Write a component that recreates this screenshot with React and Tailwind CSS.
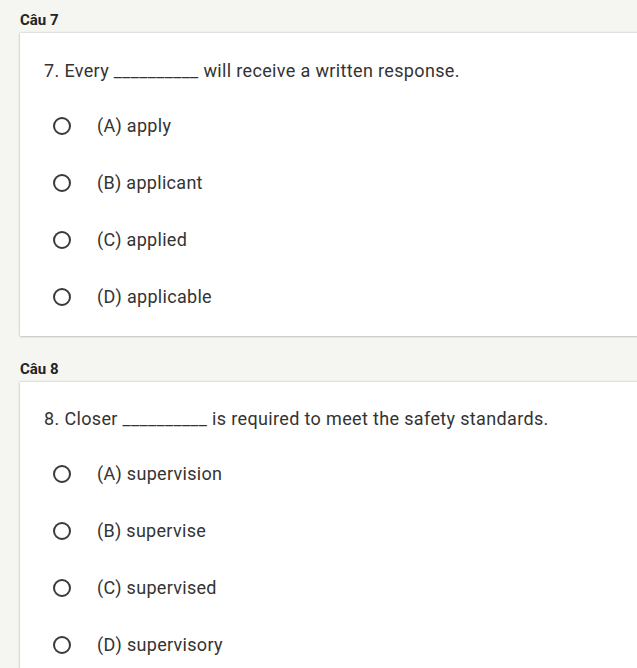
import React from "react";

const questions = [
  {
    label: "Câu 7",
    text: "7. Every __________ will receive a written response.",
    options: ["(A) apply", "(B) applicant", "(C) applied", "(D) applicable"],
  },
  {
    label: "Câu 8",
    text: "8. Closer __________ is required to meet the safety standards.",
    options: ["(A) supervision", "(B) supervise", "(C) supervised", "(D) supervisory"],
  },
];

function Radio() {
  return <span className="block w-[18px] h-[18px] rounded-full border-2 border-[#3a3a3a] box-border" />;
}

export default function App() {
  return (
    <div className="min-h-[668px] bg-[#f5f5f1] pl-5 pt-[12px] overflow-hidden" style={{ fontFamily: "Roboto, 'Liberation Sans', sans-serif" }}>
      {questions.map((q, i) => (
        <div key={i} className={i > 0 ? "mt-[25px]" : ""}>
          <div className="text-[15px] font-bold text-[#222] leading-[17px] h-[21px]">{q.label}</div>
          <div className={"bg-white w-[640px] shadow-[0_0_2px_rgba(0,0,0,0.25),0_1px_2px_rgba(0,0,0,0.12)] pb-[28px] " + (i > 0 ? "pt-[26px]" : "pt-[27px]")}>
            <div className="pl-6 text-[18px] tracking-[0.35px] leading-[22px] text-[#333] h-[22px] whitespace-nowrap">{q.text}</div>
            <div className="mt-[33px] flex flex-col gap-[35px]">
              {q.options.map((o, j) => (
                <div key={j} className="flex items-center h-[22px] pl-[33px]">
                  <Radio />
                  <span className="ml-[26px] text-[18px] tracking-[0.3px] leading-[22px] text-[#333]">{o}</span>
                </div>
              ))}
            </div>
          </div>
        </div>
      ))}
    </div>
  );
}
